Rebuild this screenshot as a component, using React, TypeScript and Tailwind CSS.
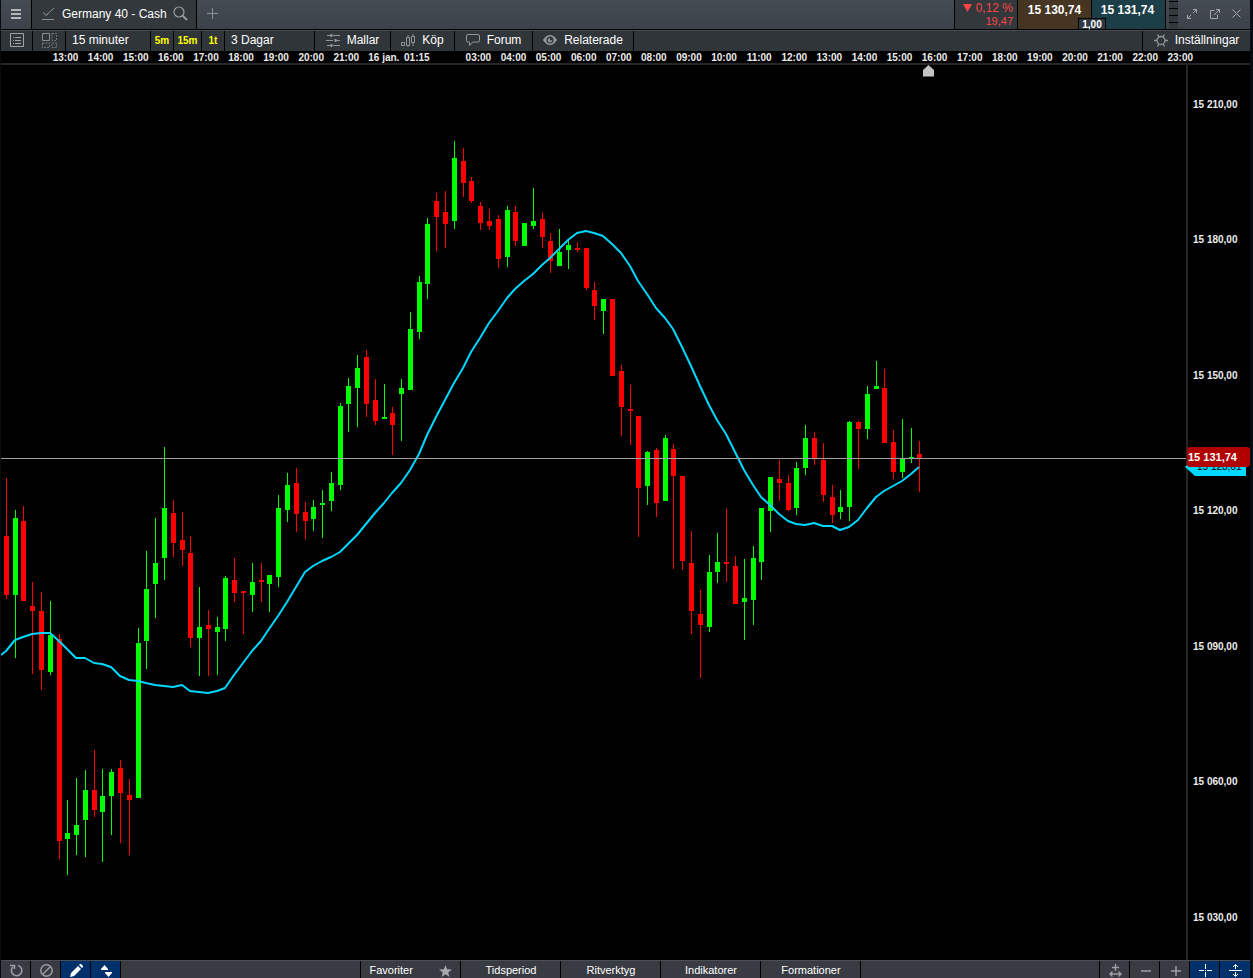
import type { ReactNode } from "react";

/* x, high, body top, body bottom, low, rising */
type Candle = [number, number, number, number, number, 0 | 1];

const candles: Candle[] = [
  [6, 478, 536, 595, 599, 0], [15, 510, 518, 595, 658, 1], [23, 506, 521, 601, 601, 0], [32, 582, 606, 611, 674, 0],
  [41, 592, 611, 670, 690, 0], [50, 601, 635, 672, 675, 1], [59, 634, 639, 841, 859, 0], [67, 800, 833, 839, 875, 1],
  [76, 778, 825, 835, 855, 1], [85, 770, 790, 820, 857, 1], [94, 750, 790, 810, 817, 0], [102, 769, 796, 812, 862, 1],
  [111, 769, 772, 796, 835, 1], [120, 760, 768, 793, 843, 0], [129, 779, 795, 800, 855, 0], [138, 628, 643, 798, 798, 1],
  [146, 551, 589, 641, 669, 1], [155, 518, 563, 584, 618, 1], [164, 447, 508, 558, 580, 1], [173, 500, 513, 543, 557, 0],
  [182, 512, 540, 550, 566, 0], [190, 536, 553, 638, 647, 0], [199, 587, 627, 638, 676, 1], [208, 610, 625, 629, 676, 0],
  [217, 617, 627, 632, 675, 1], [225, 576, 578, 629, 641, 1], [234, 558, 580, 593, 602, 0], [243, 591, 591, 593, 634, 0],
  [252, 563, 582, 595, 612, 1], [261, 563, 580, 582, 602, 0], [269, 575, 575, 584, 612, 1], [278, 495, 508, 577, 587, 1],
  [287, 473, 485, 510, 522, 1], [296, 468, 483, 514, 532, 0], [305, 502, 512, 521, 539, 0], [313, 500, 507, 519, 531, 1],
  [322, 490, 503, 505, 538, 1], [331, 472, 483, 501, 511, 1], [340, 403, 406, 485, 490, 1], [348, 378, 386, 404, 432, 1],
  [357, 355, 368, 388, 427, 1], [366, 350, 357, 404, 417, 0], [375, 379, 400, 421, 425, 0], [384, 384, 417, 419, 419, 1],
  [392, 407, 413, 425, 455, 0], [401, 379, 388, 394, 441, 1], [410, 312, 329, 390, 390, 1], [419, 276, 282, 332, 339, 1],
  [427, 218, 224, 284, 299, 1], [436, 193, 201, 217, 251, 0], [445, 191, 212, 224, 248, 0], [454, 141, 158, 221, 229, 1],
  [463, 148, 161, 183, 197, 0], [471, 177, 181, 201, 203, 0], [480, 202, 206, 223, 230, 0], [489, 209, 221, 226, 230, 0],
  [498, 215, 219, 259, 268, 0], [507, 206, 210, 257, 267, 1], [515, 206, 212, 241, 246, 0], [524, 223, 223, 246, 246, 1],
  [533, 188, 221, 226, 229, 1], [542, 213, 219, 237, 248, 0], [550, 233, 241, 261, 273, 0], [559, 229, 252, 266, 266, 1],
  [568, 239, 245, 250, 269, 1], [577, 242, 248, 250, 252, 0], [586, 248, 248, 288, 290, 0], [594, 282, 290, 306, 320, 0],
  [603, 299, 299, 311, 334, 1], [612, 299, 299, 376, 376, 0], [621, 365, 371, 407, 436, 0], [630, 385, 409, 411, 445, 0],
  [638, 416, 416, 488, 537, 0], [647, 451, 452, 486, 505, 1], [656, 448, 450, 503, 517, 0], [665, 435, 438, 501, 501, 1],
  [673, 444, 449, 476, 569, 0], [682, 476, 476, 561, 570, 0], [691, 531, 563, 611, 634, 0], [700, 590, 614, 625, 678, 0],
  [709, 555, 572, 627, 632, 1], [717, 533, 562, 572, 583, 1], [726, 509, 562, 564, 582, 0], [735, 556, 566, 604, 604, 0],
  [744, 559, 598, 602, 640, 1], [753, 546, 558, 600, 625, 1], [761, 508, 508, 562, 580, 1], [770, 477, 477, 511, 532, 1],
  [779, 460, 479, 483, 501, 0], [788, 475, 483, 510, 511, 0], [796, 462, 468, 508, 515, 1], [805, 425, 438, 468, 475, 1],
  [814, 432, 438, 458, 465, 0], [823, 443, 460, 495, 502, 0], [832, 485, 497, 515, 523, 0], [840, 490, 507, 512, 519, 1],
  [849, 421, 422, 507, 521, 1], [858, 421, 422, 429, 469, 0], [867, 386, 394, 429, 439, 1], [876, 361, 386, 389, 389, 1],
  [884, 369, 388, 443, 443, 0], [893, 430, 442, 472, 479, 0], [902, 419, 458, 472, 478, 1], [911, 428, 457, 459, 463, 1],
  [919, 441, 454, 459, 492, 0],
];

const average =
  "1,655 6,651 15,640 23,637 32,634 41,633 50,633 59,641 67,649 76,658 85,658 94,663 102,664 111,667 120,676 129,680 138,681 146,683 155,685 173,687 182,685 190,691 208,693 217,691 225,688 234,675 243,663 252,651 261,641 269,629 278,616 287,602 296,587 305,572 313,566 322,561 331,557 340,552 357,535 375,513 384,503 392,493 401,483 410,470 419,454 427,435 436,417 445,400 454,383 463,368 471,352 480,338 489,323 498,311 507,298 515,289 524,281 533,274 542,265 550,258 559,249 568,240 577,233 586,231 594,233 603,236 612,244 621,253 630,266 638,281 647,294 656,308 665,318 673,329 682,347 691,366 700,386 709,405 717,420 726,434 735,452 744,470 753,485 761,497 770,505 779,514 788,521 796,524 805,525 814,523 823,526 832,526 840,530 849,527 858,520 867,508 876,497 884,491 893,486 902,481 911,474 919,467";

const hours = (from: number, to: number): [string, number][] =>
  Array.from({ length: to - from + 1 }, (_, i) => [`${String(from + i).padStart(2, "0")}:00`, 351]);

const times: [string, number][] = [...hours(13, 21), ["16 jan.", 400], ["01:15", 260], ["", 310], ...hours(3, 23)];

const prices = ["15 210,00", "15 180,00", "15 150,00", "15 120,00", "15 090,00", "15 060,00", "15 030,00"];

const chartTop = 65;
const chartHeight = 895;
const atLevel = (y: number) => ({ top: `${((y - chartTop) / chartHeight) * 100}%` });

function Icon({ w, h, children, className = "" }: { w: number; h: number; children: ReactNode; className?: string }) {
  return (
    <svg width={w} height={h} viewBox={`0 0 ${w} ${h}`} fill="none" stroke="currentColor" className={`shrink-0 ${className}`} aria-hidden="true">
      {children}
    </svg>
  );
}

function Header() {
  return (
    <header className="flex h-[30px] shrink-0 border-b border-black bg-linear-to-b from-[#454b53] to-[#3c4249]">
      <button aria-label="Meny" className="flex w-[31px] items-center justify-center border-r border-black pb-[2px] text-[#b4b6b8]">
        <Icon w={10} h={12}>
          <path d="M0 2h10M0 6h10M0 10h10" strokeWidth="2" />
        </Icon>
      </button>
      <div className="flex w-[165px] items-center border-r border-black bg-[#33383d] pb-[2px] pl-[10px]">
        <Icon w={13} h={13} className="text-[#8b9094]">
          <path d="M0 12.500h12M1 5l3 3.500L12 1M4.500 8L6.500 6.500" />
        </Icon>
        <span className="ml-[7px] whitespace-nowrap text-[12px] leading-[14px]">Germany 40 - Cash</span>
        <button aria-label="Sök" className="ml-[6px] text-[#9a9ea2]">
          <Icon w={15} h={15}>
            <circle cx="6" cy="6" r="5" strokeWidth="1.200" />
            <path d="M9.500 9.500L14 14" strokeWidth="1.800" />
          </Icon>
        </button>
      </div>
      <button aria-label="Ny flik" className="flex w-[30px] items-center justify-center pb-[2px] text-[#8c9197]">
        <Icon w={11} h={11}>
          <path d="M5.500 0v11M0 5.500h11" />
        </Icon>
      </button>
      <div className="flex-1" />
      <div className="w-[64px] border-x border-black bg-[#33383d] pr-1 pt-[1px] text-right text-[#fb4444]">
        <div className="flex items-center justify-end gap-1 whitespace-nowrap text-[12px] leading-[14px]">
          <Icon w={9} h={8}>
            <path d="M0 0h9L4.500 8z" fill="currentColor" stroke="none" />
          </Icon>
          0,12 %
        </div>
        <div className="text-[11px] leading-[13px]">19,47</div>
      </div>
      <div className="relative flex font-bold text-[12px] leading-[20px]">
        <button className="flex w-[74px] justify-center border-r border-black bg-[#463522]">15 130,74</button>
        <button className="flex w-[74px] justify-center border-r border-black bg-[#1c3e48] pr-[2px]">15 131,74</button>
        <span className="absolute bottom-0 left-[60px] flex h-[11px] w-[28px] items-center justify-center border-x border-t border-black bg-[#2f3843] pt-[1px] text-[10px] leading-[10px]">
          1,00
        </span>
      </div>
      <div className="flex w-[12px] justify-end">
        <Icon w={9} h={29} className="bg-[#33383d] text-black">
          <path d="M0 1.500h9M0 8.500h9M0 15.500h9M0 22.500h9" />
        </Icon>
      </div>
      <div className="flex w-[72px] items-center justify-between pb-[2px] pl-[9px] pr-[9px] text-[#a4a7aa]">
        <button aria-label="Maximera">
          <Icon w={10} h={10}>
            <path d="M6 .500h3.500V4M9.500 .500L5.800 4.200M4 9.500H.500V6M.500 9.500L4.200 5.800" />
          </Icon>
        </button>
        <button aria-label="Öppna i nytt fönster">
          <Icon w={10} h={10}>
            <path d="M4.500 1.500h-4v8h7v-4M6 .500h3.500V4M9.500 .500L4 6" />
          </Icon>
        </button>
        <button aria-label="Stäng">
          <Icon w={9} h={9}>
            <path d="M.500 .500l8 8M8.500 .500l-8 8" />
          </Icon>
        </button>
      </div>
    </header>
  );
}

const cell = "flex shrink-0 items-center border-r border-black whitespace-nowrap pb-[2px]";
const quick = "flex shrink-0 items-center justify-center border-r border-black text-[10px] font-bold text-[#ffff00]";

function Toolbar() {
  return (
    <nav className="flex h-[21px] shrink-0 border-t border-[#454a50] bg-[#30353a] text-[12px] leading-[14px]">
      <button aria-label="Lista" className={`${cell} w-[32px] justify-center text-[#a0a4a7]`}>
        <Icon w={14} h={14}>
          <path d="M.500 .500h13v13H.500zM5 4.500h6M5 7.500h6M5 10.500h6M3 4.500h1M3 7.500h1M3 10.500h1" />
        </Icon>
      </button>
      <button aria-label="Layout" className={`${cell} w-[33px] justify-center text-[#898e92]`}>
        <Icon w={15} h={15}>
          <path d="M.500 .500h7v7h-7z" />
          <path d="M10 .500h4.500v7H10zM.500 10h7v4.500h-7zM10 10h4.500v4.500H10z" strokeDasharray="2 1" opacity=".7" />
        </Icon>
      </button>
      <button className={`${cell} w-[85px] pl-[6px]`}>15 minuter</button>
      <button className={`${quick} w-[23px]`}>5m</button>
      <button className={`${quick} w-[28px]`}>15m</button>
      <button className={`${quick} w-[23px]`}>1t</button>
      <button className={`${cell} w-[90px] pl-[6px]`}>3 Dagar</button>
      <button className={`${cell} w-[76px] justify-center gap-[7px]`}>
        <Icon w={14} h={13} className="text-[#92979b]">
          <path d="M1 1.500h4M7 1.500h7M0 6.500h7M10 6.500h4M1 11.500h4M7 11.500h7" />
          <path d="M5.500 0v3M9.500 5v3M5.500 10v3" strokeWidth="2" />
        </Icon>
        Mallar
      </button>
      <button className={`${cell} w-[64px] justify-center gap-[7px]`}>
        <Icon w={14} h={13} className="text-[#92979b]">
          <path d="M.500 8.500h3v3h-3zM5.500 3.500h3v8h-3zM10.500 2.500h3v6h-3zM7 1v2M7 12v1M12 0v2M12 9v3" />
        </Icon>
        Köp
      </button>
      <button className={`${cell} w-[78px] justify-center gap-[7px]`}>
        <Icon w={14} h={12} className="text-[#92979b]">
          <path d="M2 .500h10q1.500 0 1.500 1.500v4.500q0 1.500-1.500 1.500H7L3.500 11.500V8H2Q.500 8 .500 6.500V2Q.500 .500 2 .500z" />
        </Icon>
        Forum
      </button>
      <button className={`${cell} w-[101px] justify-center gap-[7px]`}>
        <Icon w={14} h={10} className="text-[#92979b]">
          <path fillRule="evenodd" fill="currentColor" stroke="none" d="M0 5Q3 0 7 0T14 5Q11 10 7 10T0 5zM7 1.500A3.500 3.500 0 1 0 7 8.500A3.500 3.500 0 1 0 7 1.500z" />
          <path fill="currentColor" stroke="none" d="M7 3a2.200 2.200 0 1 0 2.200 2.200H7z" />
        </Icon>
        Relaterade
      </button>
      <div className="flex-1 border-r border-black" />
      <button className="flex w-[107px] shrink-0 items-center justify-center gap-[7px] whitespace-nowrap pb-[2px]">
        <Icon w={14} h={13} className="text-[#92979b]">
          <circle cx="7" cy="6.500" r="4" strokeWidth="1.300" />
          <path d="M0 6.500h3M11 6.500h3M3.500 .500l1.500 2.500M10.500 .500L9 3M3.500 12.500l1.500-2.500M10.500 12.500l-1.500-2.500" strokeWidth="1.300" />
        </Icon>
        Inställningar
      </button>
    </nav>
  );
}

function TimeAxis() {
  return (
    <div className="flex h-[14px] shrink-0 border-b-2 border-[#262626] pl-[47px] pr-[52px] text-[10px] font-bold leading-[13px] text-[#ececec]">
      {times.map(([label, share], i) => (
        <span key={i} className="flex w-0 justify-center whitespace-nowrap" style={{ flexGrow: share }}>
          {label}
        </span>
      ))}
    </div>
  );
}

function Chart() {
  return (
    <main className="flex min-h-0 flex-1">
      <div className="min-w-0 flex-1">
        <svg viewBox="1 65 1185 895" preserveAspectRatio="none" className="block h-full w-full" role="img" aria-label="Germany 40 - Cash">
          {candles.map(([x, high, top, bottom, low, rising]) => (
            <g key={x} fill={rising ? "#00ff00" : "#ff0000"} shapeRendering="crispEdges">
              <rect x={x} y={high} width="1" height={low - high} />
              <rect x={x - 2} y={top} width="5" height={bottom - top} />
            </g>
          ))}
          <polyline points={average} fill="none" stroke="#00d8ff" strokeWidth="2" strokeLinejoin="round" />
          <rect x="1" y="458" width="1185" height="1" fill="#a0a0a0" />
          <path d="M928.500 65L934 70V76.500H923V70z" fill="#c4c4c4" />
        </svg>
      </div>
      <div className="relative w-[64px] shrink-0 border-l-2 border-[#262626]">
        <div className="flex h-full flex-col justify-between pb-[43px] pl-[5px] pt-[39px] text-[10px] font-bold text-[#ececec]">
          {prices.map((p) => (
            <span key={p} className="flex h-0 items-center whitespace-nowrap">{p}</span>
          ))}
        </div>
        <div className="absolute left-[-3px] right-[4px]" style={atLevel(460)}>
          <div className="flex h-4 items-center bg-[#00d8ff] pb-[2px] pl-[12px] text-[10px] leading-[12px] text-black [clip-path:polygon(0_7px,7px_0,100%_0,100%_100%,10px_100%)]">
            15 128,61
          </div>
        </div>
        <div className="absolute left-[-1px] right-0 flex h-5 items-center rounded-[3px] bg-[#b00000] pl-[1px] text-[11px] font-bold" style={atLevel(447)}>
          15 131,74
        </div>
      </div>
    </main>
  );
}

const tool = "flex w-[30px] shrink-0 items-center justify-center border-r border-black pl-[2px] pt-[2px]";

function Footer() {
  return (
    <footer className="flex h-[18px] shrink-0 border-t border-[#4b4f56] bg-[#383b42] text-[11px] leading-[15px]">
      <button aria-label="Återställ" className={`${tool} text-[#9b9ea2]`}>
        <Icon w={13} h={13}>
          <path d="M8 1.500A5.200 5.200 0 1 1 2.800 3M0 1.500h4.500V5" strokeWidth="1.600" />
        </Icon>
      </button>
      <button aria-label="Rensa" className={`${tool} text-[#9b9ea2]`}>
        <Icon w={13} h={13}>
          <circle cx="6.500" cy="6.500" r="5.700" strokeWidth="1.500" />
          <path d="M2.500 10.500l8-8" strokeWidth="1.500" />
        </Icon>
      </button>
      <button aria-label="Rita" className={`${tool} bg-[#00316b]`}>
        <Icon w={13} h={13}>
          <path d="M0 13l1-4L8 2l3 3-7 7zM9 1l1-1h1l2 2v1l-1 1z" fill="currentColor" stroke="none" />
        </Icon>
      </button>
      <button aria-label="Sortera" className={`${tool} bg-[#00316b]`}>
        <Icon w={11} h={12}>
          <path d="M0 4L3.500 0 7 4v1H0zM4 7h7v1l-3.500 4L4 8z" fill="currentColor" stroke="none" />
        </Icon>
      </button>
      <div className="flex-1 border-r border-black" />
      <button className="flex w-[100px] items-center justify-between border-r border-black pl-[9px] pr-2 pt-[2px]">
        Favoriter
        <Icon w={13} h={12} className="text-[#a6a8ab]">
          <path d="M6.500 0l1.600 4.300 4.900.200-3.800 2.900L10.500 12l-4-2.700L2.500 12l1.300-4.600L0 4.500l4.900-.200z" fill="currentColor" stroke="none" />
        </Icon>
      </button>
      {["Tidsperiod", "Ritverktyg", "Indikatorer", "Formationer"].map((t) => (
        <button key={t} className="w-[100px] border-r border-black pl-[2px] pt-[2px] text-center">{t}</button>
      ))}
      <div className="flex-1 border-r border-black" />
      <button aria-label="Anpassa bredd" className={`${tool} text-[#9b9ea2]`}>
        <Icon w={13} h={13}>
          <path d="M6.500 0v7M3 3.500h7M1 10h11M3.500 7.500L1 10l2.500 2.500M9.500 7.500L12 10l-2.500 2.500" strokeWidth="1.400" />
        </Icon>
      </button>
      <button aria-label="Zooma ut" className={`${tool} text-[#9b9ea2]`}>
        <Icon w={10} h={10}>
          <path d="M0 5h10" strokeWidth="1.500" />
        </Icon>
      </button>
      <button aria-label="Zooma in" className={`${tool} text-[#9b9ea2]`}>
        <Icon w={10} h={10}>
          <path d="M0 5h10M5 0v10" strokeWidth="1.500" />
        </Icon>
      </button>
      <button aria-label="Hårkors" className={`${tool} bg-[#00316b]`}>
        <Icon w={13} h={13}>
          <path d="M0 6.500h5M8 6.500h5M6.500 0v5M6.500 8v5M6 6.500h1" />
        </Icon>
      </button>
      <button aria-label="Anpassa höjd" className="flex w-[30px] shrink-0 items-center justify-center bg-[#00316b] pt-[2px]">
        <Icon w={13} h={13}>
          <path d="M0 6.500h13M6.500 1v4M4 3l2.500-2.500L9 3M6.500 8v4M4 10l2.500 2.500L9 10" />
        </Icon>
      </button>
    </footer>
  );
}

export default function App() {
  return (
    <div className="flex h-screen flex-col overflow-hidden border-l border-r-[3px] border-l-[#070c12] border-r-[#070c12] bg-black text-white [font-family:'Liberation_Sans',Arial,sans-serif]">
      <Header />
      <Toolbar />
      <TimeAxis />
      <Chart />
      <Footer />
    </div>
  );
}
